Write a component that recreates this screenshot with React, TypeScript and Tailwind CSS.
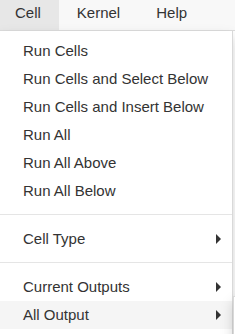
const groups: { label: string; sub?: boolean; active?: boolean }[][] = [
  [
    { label: "Run Cells" },
    { label: "Run Cells and Select Below" },
    { label: "Run Cells and Insert Below" },
    { label: "Run All" },
    { label: "Run All Above" },
    { label: "Run All Below" },
  ],
  [{ label: "Cell Type", sub: true }],
  [
    { label: "Current Outputs", sub: true },
    { label: "All Output", sub: true, active: true },
  ],
];

export default function App() {
  return (
    <div className="relative h-[334px] w-[235px] overflow-hidden bg-white font-['Liberation_Sans',Arial,sans-serif] text-[15px] text-[#333]">
      <div className="flex h-[31px] border-b border-[#dcdcdc] bg-[#f8f8f8]">
        <div className="h-[30px] bg-[#e7e7e7] pl-[15px] pr-[18px] pt-[4px] leading-[17px]">Cell</div>
        <div className="h-[30px] px-[18px] pt-[4px] leading-[17px]">Kernel</div>
        <div className="h-[30px] px-[18px] pt-[4px] leading-[17px]">Help</div>
      </div>

      <div className="relative z-10 ml-[-1px] w-[234px] border border-t-0 border-[rgba(0,0,0,0.15)] bg-white pb-[5px] pt-[6px] shadow-[0_6px_12px_rgba(0,0,0,0.175)]">
        {groups.map((group, gi) => (
          <div key={gi}>
            {gi > 0 ? <div className="mb-[10px] mt-[9px] h-px bg-[#e5e5e5]" /> : null}
            {group.map((item) => (
              <div
                key={item.label}
                className={`flex h-[28px] items-center justify-between pl-[23px] pr-[11px] ${item.active ? "bg-[#f5f5f5]" : ""}`}
              >
                <span className="whitespace-nowrap">{item.label}</span>
                {item.sub ? (
                  <span className="mb-[1px] h-0 w-0 border-y-[5px] border-l-[5px] border-y-transparent border-l-[#333]" />
                ) : null}
              </div>
            ))}
          </div>
        ))}
      </div>

      {/* submenu opened from All Output, mostly off screen */}
      <div className="absolute left-[233px] top-[296px] z-20 h-[120px] w-[160px] border border-[rgba(0,0,0,0.15)] bg-white shadow-[0_6px_12px_rgba(0,0,0,0.175)]" />
    </div>
  );
}
